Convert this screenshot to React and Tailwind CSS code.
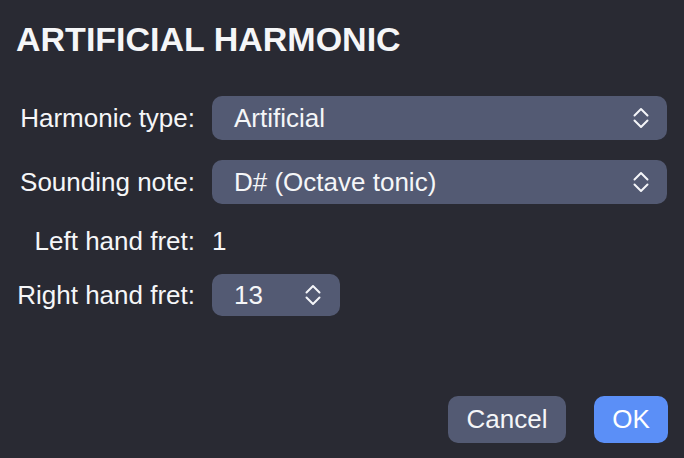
import React from "react";

function Chevrons() {
  return (
    <svg width="16" height="22" viewBox="0 0 16 22" fill="none" stroke="#f4f5f8" strokeWidth="2" strokeLinecap="round" strokeLinejoin="round">
      <polyline points="1.5,8.5 8,2 14.5,8.5" />
      <polyline points="1.5,13.5 8,20 14.5,13.5" />
    </svg>
  );
}

function Select({ value, className }) {
  return (
    <div className={"flex items-center justify-between rounded-[10px] bg-[#535a73] pl-[22px] pr-[18px] " + className}>
      <span>{value}</span>
      <Chevrons />
    </div>
  );
}

export default function App() {
  return (
    <div
      className="w-[684px] h-[458px] bg-[#292a33] text-[#f5f6f8] flex flex-col overflow-hidden"
      style={{ fontFamily: '"Liberation Sans", Arial, sans-serif' }}
    >
      <h1 className="pt-[19px] pl-[16px] text-[34px] leading-[40px] font-bold tracking-[0px]">ARTIFICIAL HARMONIC</h1>
      <div className="mt-[37px] pl-[16px] pr-[17px] flex flex-col text-[26px]">
        <div className="flex items-center h-[44px]">
          <div className="w-[180px] text-right pr-[1px]">Harmonic type:</div>
          <Select value="Artificial" className="ml-[16px] flex-1 h-[44px]" />
        </div>
        <div className="flex items-center h-[44px] mt-[20px]">
          <div className="w-[180px] text-right pr-[1px]">Sounding note:</div>
          <Select value="D# (Octave tonic)" className="ml-[16px] flex-1 h-[44px]" />
        </div>
        <div className="flex items-center h-[34px] mt-[20px]">
          <div className="w-[180px] text-right pr-[1px]">Left hand fret:</div>
          <div className="ml-[16px]">1</div>
        </div>
        <div className="flex items-center h-[42px] mt-[16px]">
          <div className="w-[180px] text-right pr-[1px]">Right hand fret:</div>
          <Select value="13" className="ml-[16px] w-[128px] h-[42px] pr-[19px]" />
        </div>
      </div>
      <div className="mt-auto mb-[15px] pr-[16px] flex justify-end gap-[28px] text-[26px]">
        <button className="h-[47px] w-[118px] rounded-[10px] bg-[#535a73] text-[#f5f6f8]">Cancel</button>
        <button className="h-[47px] w-[74px] rounded-[10px] bg-[#5b8ff7] text-white">OK</button>
      </div>
    </div>
  );
}
